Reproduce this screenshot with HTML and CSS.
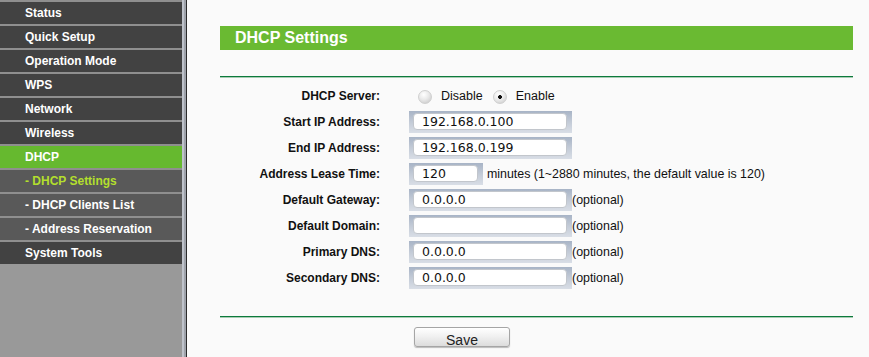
FILE: index.html
```html
<!DOCTYPE html>
<html>
<head>
<meta charset="utf-8">
<link rel="stylesheet" href="styles.css">
</head>
<body>
<div class="page">
  <nav class="sidebar">
    <ul class="menu">
      <li class="item">Status</li>
      <li class="item">Quick Setup</li>
      <li class="item">Operation Mode</li>
      <li class="item">WPS</li>
      <li class="item">Network</li>
      <li class="item">Wireless</li>
      <li class="item active">DHCP</li>
      <li class="item sub current">- DHCP Settings</li>
      <li class="item sub">- DHCP Clients List</li>
      <li class="item sub">- Address Reservation</li>
      <li class="item">System Tools</li>
    </ul>
  </nav>
  <div class="frame"></div>
  <main class="main">
    <div class="panel">
      <h1 class="title">DHCP Settings</h1>
      <div class="rule top-rule"></div>
      <div class="form">
        <div class="label">DHCP Server:</div>
        <div class="value radios">
          <span class="radio"></span><span class="radio-text">Disable</span>
          <span class="radio checked"></span><span class="radio-text">Enable</span>
        </div>

        <div class="label">Start IP Address:</div>
        <div class="value"><span class="field"><span class="box">192.168.0.100</span></span></div>

        <div class="label">End IP Address:</div>
        <div class="value"><span class="field"><span class="box">192.168.0.199</span></span></div>

        <div class="label">Address Lease Time:</div>
        <div class="value"><span class="field short"><span class="box">120</span></span><span class="note lease">minutes (1~2880 minutes, the default value is 120)</span></div>

        <div class="label">Default Gateway:</div>
        <div class="value"><span class="field"><span class="box">0.0.0.0</span></span><span class="note">(optional)</span></div>

        <div class="label">Default Domain:</div>
        <div class="value"><span class="field"><span class="box"></span></span><span class="note">(optional)</span></div>

        <div class="label">Primary DNS:</div>
        <div class="value"><span class="field"><span class="box">0.0.0.0</span></span><span class="note">(optional)</span></div>

        <div class="label">Secondary DNS:</div>
        <div class="value"><span class="field"><span class="box">0.0.0.0</span></span><span class="note">(optional)</span></div>
      </div>
      <div class="rule bottom-rule"></div>
      <div class="actions">
        <button class="save" type="button">Save</button>
      </div>
    </div>
  </main>
</div>
</body>
</html>
```

FILE: styles.css
```css
html, body {
  margin: 0;
  padding: 0;
  height: 100%;
  background: #fafafa;
  overflow: hidden;
}

.page {
  display: flex;
  height: 357px;
}

.sidebar {
  width: 182px;
  flex: none;
  background: #999999;
}

.menu {
  list-style: none;
  margin: 0;
  padding: 0;
}

.item {
  height: 22px;
  line-height: 22px;
  border-top: 2px solid #8f8f8f;
  background: #424242;
  color: #ffffff;
  font-family: "Liberation Sans", Arial, sans-serif;
  font-weight: bold;
  font-size: 12px;
  padding-left: 25px;
}

.item.active {
  background: #66b92f;
}

.item.sub {
  background: #595959;
}

.item.current {
  color: #b3df2d;
}

.frame {
  width: 5px;
  flex: none;
  background: linear-gradient(to right, #bfc3cb 0, #bfc3cb 2px, #9ea2aa 2px, #9ea2aa 4px, #2b2b2b 4px, #2b2b2b 5px);
}

.main {
  flex: 1;
  padding: 26px 16px 0 33px;
  background: #fafafa;
}

.title {
  margin: 0;
  height: 24px;
  line-height: 24px;
  background: #6aba32;
  color: #ffffff;
  font-family: "Liberation Sans", Arial, sans-serif;
  font-weight: bold;
  font-size: 16px;
  padding-left: 15px;
}

.rule {
  height: 1px;
  background: #0d7a3c;
  box-shadow: 0 1px 0 #a9cdb4;
}

.top-rule {
  margin-top: 26px;
}

.form {
  margin-top: 6px;
  display: grid;
  grid-template-columns: 160px 1fr;
  grid-auto-rows: 26px;
  column-gap: 29px;
  align-items: center;
  font-family: "Liberation Sans", Arial, sans-serif;
  color: #111;
}

.label {
  text-align: right;
  font-weight: bold;
  font-size: 12px;
}

.value {
  display: flex;
  align-items: center;
  font-size: 12.4px;
}

.radios {
  padding-left: 9px;
  font-size: 12.5px;
}

.radio {
  width: 14px;
  height: 14px;
  border-radius: 50%;
  box-sizing: border-box;
  border: 1px solid #cfcfcf;
  background: radial-gradient(circle at 40% 30%, #ffffff 0, #e9e9e9 45%, #c4c4c4 100%);
  margin-right: 9px;
  position: relative;
  top: 1px;
}

.radio.checked {
  background: radial-gradient(circle, #111 0, #111 1.6px, transparent 2.2px), radial-gradient(circle at 40% 30%, #ffffff 0, #ececec 45%, #c8c8c8 100%);
}

.radio-text {
  margin-right: 10px;
}

.field {
  display: inline-flex;
  width: 163px;
  height: 22px;
  box-sizing: border-box;
  padding: 2px 5px 3px 4px;
  background: linear-gradient(to bottom, #a8b4c6 0, #c3cbd7 50%, #d9dee6 100%);
}

.field.short {
  width: 74px;
}

.box {
  flex: 1;
  box-sizing: border-box;
  background: #ffffff;
  border: 1px solid #c2c6cc;
  border-radius: 4px;
  font-family: "DejaVu Sans", Verdana, sans-serif;
  font-size: 12.5px;
  line-height: 15px;
  padding-left: 8px;
  color: #111;
}

.note {
  margin-left: 0;
}

.note.lease {
  margin-left: 4px;
}

.bottom-rule {
  margin-top: 25px;
}

.actions {
  padding-left: 194px;
  margin-top: 10px;
}

.save {
  width: 96px;
  height: 20px;
  padding: 0;
  border: 1px solid #a5a5a5;
  border-radius: 3px;
  background: linear-gradient(to bottom, #ffffff 0, #f1f1f1 45%, #dcdcdc 100%);
  box-shadow: 0 1px 1px rgba(0, 0, 0, 0.25);
  font-family: "Liberation Sans", Arial, sans-serif;
  font-size: 14px;
  color: #222;
  line-height: 18px;
  padding-top: 3px;
}
```
